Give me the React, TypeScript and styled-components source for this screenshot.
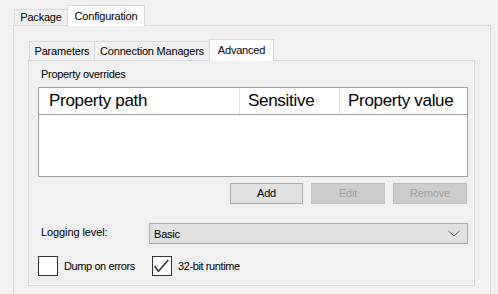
import { FC, ReactNode } from "react";
import styled, { createGlobalStyle } from "styled-components";

const COLORS = {
    face: "#f0f0f0",
    tabBorder: "#d9d9d9",
    white: "#ffffff",
    listBorder: "#a0a0a0",
    columnLine: "#e5e5e5",
    buttonFace: "#e1e1e1",
    buttonBorder: "#adadad",
    disabledFace: "#cccccc",
    disabledBorder: "#bfbfbf",
    disabledText: "#a0a0a0",
    text: "#000000",
    checkBorder: "#333333",
};

const GlobalStyle = createGlobalStyle`
    html, body {
        margin: 0;
        padding: 0;
        background: ${COLORS.face};
    }
    body {
        font-family: "Liberation Sans", Arial, sans-serif;
        font-size: 11px;
        color: ${COLORS.text};
    }
`;

interface TabProps {
    label: string;
    w: number;
    h: number;
    active?: boolean;
}

const Tab: FC<TabProps> = ({ label, w, h, active }) => (
    <TabItem $w={w} $h={h} $active={active}>
        {label}
    </TabItem>
);

const Page = styled.div`
    width: 498px;
    height: 294px;
    overflow: hidden;
    padding-top: 5px;
    box-sizing: border-box;
`;

const OuterTabs = styled.div`
    margin-left: 13px;
    width: 478px;
`;

const TabStrip = styled.div<{ $h: number }>`
    display: flex;
    align-items: flex-end;
    height: ${({ $h }) => $h}px;
    padding-left: 1px;
    position: relative;
    z-index: 1;
`;

const TabItem = styled.div<{ $w: number; $h: number; $active?: boolean }>`
    box-sizing: border-box;
    width: ${({ $w }) => $w}px;
    height: ${({ $h }) => $h}px;
    margin-bottom: ${({ $active }) => ($active ? "-1px" : "0")};
    display: flex;
    align-items: center;
    justify-content: center;
    border: 1px solid ${COLORS.tabBorder};
    border-bottom: none;
    border-right: ${({ $active }) =>
        $active ? `1px solid ${COLORS.tabBorder}` : "none"};
    background: ${({ $active }) => ($active ? COLORS.white : COLORS.face)};
    letter-spacing: -0.2px;
    white-space: nowrap;
    padding-bottom: 1px;
`;

const OuterPanel = styled.div`
    box-sizing: border-box;
    height: 330px;
    border: 1px solid ${COLORS.tabBorder};
    box-shadow: inset -1px 0 0 ${COLORS.white};
    padding: 13px 0 0 14px;
`;

const InnerTabs = styled.div`
    width: 447px;
`;

const InnerPanel = styled.div`
    box-sizing: border-box;
    height: 226px;
    border: 1px solid ${COLORS.tabBorder};
    box-shadow: inset -1px -1px 0 ${COLORS.white};
    padding: 7px 6px 0 9px;
    display: flex;
    flex-direction: column;
`;

const GroupLabel = styled.div`
    height: 13px;
    line-height: 13px;
    margin-left: 3px;
    letter-spacing: -0.3px;
`;

const ListView = styled.div`
    box-sizing: border-box;
    margin-top: 6px;
    height: 90px;
    border: 1px solid ${COLORS.listBorder};
    background: ${COLORS.white};
    display: flex;
    flex-direction: column;
`;

const ListHeader = styled.div`
    display: grid;
    grid-template-columns: 201px 100px 1fr;
    height: 26px;
    border-bottom: 1px solid ${COLORS.listBorder};
`;

const HeaderCell = styled.div<{ $pad: number; $last?: boolean }>`
    box-sizing: border-box;
    display: flex;
    align-items: center;
    padding-left: ${({ $pad }) => $pad}px;
    border-right: ${({ $last }) =>
        $last ? "none" : `1px solid ${COLORS.columnLine}`};
    font-size: 17px;
    letter-spacing: -0.3px;
    white-space: nowrap;
    padding-bottom: 1px;
`;

const ButtonRow = styled.div`
    margin-top: 6px;
    display: flex;
    justify-content: flex-end;
    gap: 8px;
    padding-right: 1px;
`;

const PushButton = styled.button<{ $w: number }>`
    box-sizing: border-box;
    width: ${({ $w }) => $w}px;
    height: 21px;
    margin: 0;
    padding: 0 0 1px;
    font-family: "Liberation Sans", Arial, sans-serif;
    font-size: 11px;
    letter-spacing: -0.2px;
    color: ${COLORS.text};
    background: ${COLORS.buttonFace};
    border: 1px solid ${COLORS.buttonBorder};
    border-radius: 0;

    &:disabled {
        color: ${COLORS.disabledText};
        background: ${COLORS.disabledFace};
        border-color: ${COLORS.disabledBorder};
    }
`;

const FieldRow = styled.div`
    margin-top: 19px;
    display: flex;
    align-items: center;
    height: 21px;
`;

const FieldLabel = styled.div`
    width: 108px;
    margin-left: 3px;
    padding-bottom: 3px;
    letter-spacing: -0.1px;
`;

const ComboBox = styled.div`
    box-sizing: border-box;
    flex: 1;
    height: 21px;
    display: flex;
    align-items: center;
    justify-content: space-between;
    padding: 0 7px 0 4px;
    background: ${COLORS.buttonFace};
    border: 1px solid ${COLORS.buttonBorder};
    letter-spacing: -0.2px;
`;

const CheckRow = styled.div`
    margin-top: 12px;
    display: flex;
    align-items: center;
    height: 20px;
`;

const CheckItem = styled.label<{ $w: number }>`
    display: flex;
    align-items: center;
    gap: 6px;
    width: ${({ $w }) => $w}px;
    letter-spacing: -0.4px;
    white-space: nowrap;
`;

const CheckBox = styled.span`
    box-sizing: border-box;
    width: 20px;
    height: 20px;
    border: 1px solid ${COLORS.checkBorder};
    background: ${COLORS.white};
    display: flex;
    flex-shrink: 0;
`;

interface CheckProps {
    label: ReactNode;
    checked?: boolean;
    w: number;
}

const Check: FC<CheckProps> = ({ label, checked, w }) => (
    <CheckItem $w={w}>
        <CheckBox>
            {checked && (
                <svg width="18" height="18" viewBox="0 0 18 18">
                    <path
                        d="M1.5 9 L5.5 14.2 L15.3 3"
                        fill="none"
                        stroke={COLORS.checkBorder}
                        strokeWidth="1.6"
                    />
                </svg>
            )}
        </CheckBox>
        <span>{label}</span>
    </CheckItem>
);

export default function App() {
    return (
        <>
            <GlobalStyle />
            <Page>
                <OuterTabs>
                    <TabStrip $h={20}>
                        <Tab label="Package" w={53} h={16} />
                        <Tab label="Configuration" w={78} h={21} active />
                    </TabStrip>
                    <OuterPanel>
                        <InnerTabs>
                            <TabStrip $h={21}>
                                <Tab label="Parameters" w={65} h={19} />
                                <Tab label="Connection Managers" w={115} h={19} />
                                <Tab label="Advanced" w={65} h={22} active />
                            </TabStrip>
                            <InnerPanel>
                                <GroupLabel>Property overrides</GroupLabel>
                                <ListView>
                                    <ListHeader>
                                        <HeaderCell $pad={10}>Property path</HeaderCell>
                                        <HeaderCell $pad={8}>Sensitive</HeaderCell>
                                        <HeaderCell $pad={8} $last>
                                            Property value
                                        </HeaderCell>
                                    </ListHeader>
                                </ListView>
                                <ButtonRow>
                                    <PushButton $w={73}>Add</PushButton>
                                    <PushButton $w={74} disabled>
                                        Edit
                                    </PushButton>
                                    <PushButton $w={74} disabled>
                                        Remove
                                    </PushButton>
                                </ButtonRow>
                                <FieldRow>
                                    <FieldLabel>Logging level:</FieldLabel>
                                    <ComboBox>
                                        <span>Basic</span>
                                        <svg width="12" height="7" viewBox="0 0 12 7">
                                            <path
                                                d="M0.5 0.8 L6 6 L11.5 0.8"
                                                fill="none"
                                                stroke="#606060"
                                                strokeWidth="1"
                                            />
                                        </svg>
                                    </ComboBox>
                                </FieldRow>
                                <CheckRow>
                                    <Check label="Dump on errors" w={114} />
                                    <Check label="32-bit runtime" w={110} checked />
                                </CheckRow>
                            </InnerPanel>
                        </InnerTabs>
                    </OuterPanel>
                </OuterTabs>
            </Page>
        </>
    );
}
